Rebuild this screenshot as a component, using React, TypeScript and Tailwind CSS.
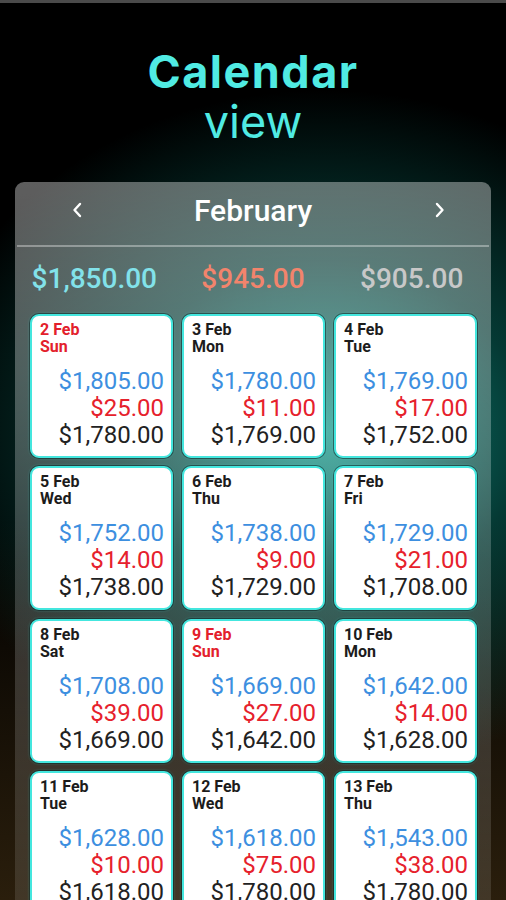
import React from "react";

type Day = { d: string; w: string; a: string; b: string; c: string; sun?: boolean };

const days: Day[] = [
  { d: "2 Feb", w: "Sun", a: "$1,805.00", b: "$25.00", c: "$1,780.00", sun: true },
  { d: "3 Feb", w: "Mon", a: "$1,780.00", b: "$11.00", c: "$1,769.00" },
  { d: "4 Feb", w: "Tue", a: "$1,769.00", b: "$17.00", c: "$1,752.00" },
  { d: "5 Feb", w: "Wed", a: "$1,752.00", b: "$14.00", c: "$1,738.00" },
  { d: "6 Feb", w: "Thu", a: "$1,738.00", b: "$9.00", c: "$1,729.00" },
  { d: "7 Feb", w: "Fri", a: "$1,729.00", b: "$21.00", c: "$1,708.00" },
  { d: "8 Feb", w: "Sat", a: "$1,708.00", b: "$39.00", c: "$1,669.00" },
  { d: "9 Feb", w: "Sun", a: "$1,669.00", b: "$27.00", c: "$1,642.00", sun: true },
  { d: "10 Feb", w: "Mon", a: "$1,642.00", b: "$14.00", c: "$1,628.00" },
  { d: "11 Feb", w: "Tue", a: "$1,628.00", b: "$10.00", c: "$1,618.00" },
  { d: "12 Feb", w: "Wed", a: "$1,618.00", b: "$75.00", c: "$1,780.00" },
  { d: "13 Feb", w: "Thu", a: "$1,543.00", b: "$38.00", c: "$1,780.00" },
];

function Chevron({ dir }: { dir: "l" | "r" }) {
  return (
    <svg width="10" height="16" viewBox="0 0 10 16" fill="none">
      <path
        d={dir === "l" ? "M8 2 L2.5 8 L8 14" : "M2 2 L7.5 8 L2 14"}
        stroke="white"
        strokeWidth="2.4"
        strokeLinecap="round"
        strokeLinejoin="round"
      />
    </svg>
  );
}

function Card({ day }: { day: Day }) {
  return (
    <div className="h-[144px] rounded-[9px] border-2 border-[#44e6de] bg-white shadow-[0_0_0_1px_rgba(0,0,0,0.45),0_0_3px_rgba(68,230,222,0.6)] flex flex-col pl-[8px] pr-[7px] pt-[5px] overflow-hidden">
      <div
        className={`text-[16px] font-bold leading-[17px] ${day.sun ? "text-[#e3202b]" : "text-[#1c1c1c]"}`}
      >
        <div>{day.d}</div>
        <div>{day.w}</div>
      </div>
      <div className="mt-[13px] text-right text-[24px] leading-[27px]">
        <div className="text-[#3d8fe0]">{day.a}</div>
        <div className="text-[#e6212c]">{day.b}</div>
        <div className="text-[#222222]">{day.c}</div>
      </div>
    </div>
  );
}

export default function App() {
  return (
    <div
      className="relative h-[900px] w-full overflow-hidden bg-black bg-[radial-gradient(ellipse_80%_38%_at_64%_48%,rgba(16,160,145,0.95)_0%,rgba(8,95,86,0.6)_50%,rgba(0,0,0,0)_100%),linear-gradient(to_bottom,rgba(0,0,0,0)_58%,rgba(42,30,12,1)_100%)]"
      style={{ fontFamily: "Roboto, 'Liberation Sans', sans-serif" }}
    >
      <div className="h-[3px] bg-[#4a4a4a]" />
      <div
        className="pt-[44px] text-center text-[#50ebe3] text-[45px] leading-[50px]"
        style={{ fontFamily: "Inter, 'Open Sans', sans-serif" }}
      >
        <div className="font-bold tracking-[1.5px]">Calendar</div>
        <div className="font-normal">view</div>
      </div>

      <div className="mx-[15px] mt-[35px] rounded-t-[9px] bg-[linear-gradient(to_bottom,rgba(255,255,255,0.37)_0%,rgba(255,255,255,0.3)_25%,rgba(255,255,255,0.2)_50%,rgba(255,255,255,0.1)_100%)] pb-[20px]">
        <div className="grid h-[56px] grid-cols-3 items-center">
          <div className="flex justify-start pl-[57px]">
            <Chevron dir="l" />
          </div>
          <div className="whitespace-nowrap text-center text-[30px] font-medium text-white">
            February
          </div>
          <div className="flex justify-end pr-[46px]">
            <Chevron dir="r" />
          </div>
        </div>
        <div className="mx-[2px] mt-[7px] h-[1.5px] bg-[rgba(255,255,255,0.35)]" />
        <div className="grid grid-cols-3 pt-[16px] text-center text-[28px] font-medium leading-[32px]">
          <div className="text-[#82e2ea]">$1,850.00</div>
          <div className="text-[#f2846c]">$945.00</div>
          <div className="text-[#c8c8c8]">$905.00</div>
        </div>
        <div className="mt-[19px] grid grid-cols-3 gap-x-[9px] gap-y-[8.5px] pl-[15px] pr-[14px]">
          {days.map((d) => (
            <Card key={d.d} day={d} />
          ))}
        </div>
      </div>
    </div>
  );
}
